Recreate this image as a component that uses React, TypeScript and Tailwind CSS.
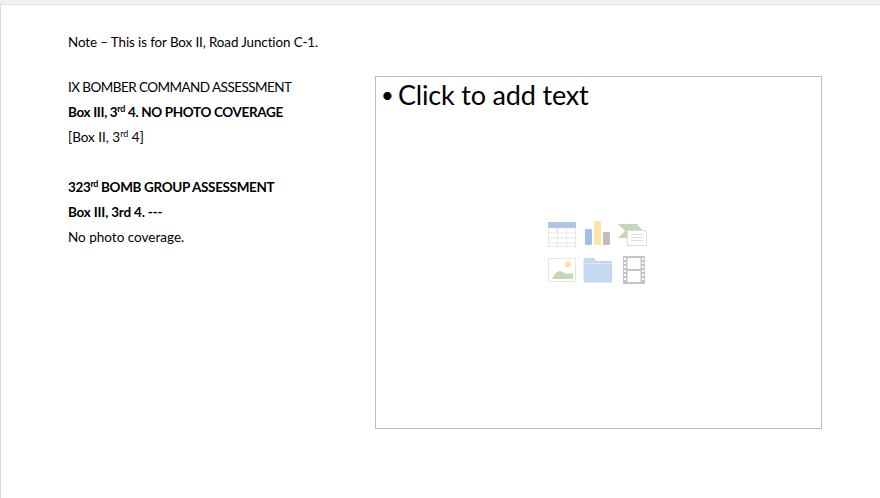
const Sup = ({ children }: { children: React.ReactNode }) => (
  <sup className="relative top-[-5px] align-baseline text-[9px] leading-none">{children}</sup>
);

const TableIcon = () => (
  <svg width="28" height="28" viewBox="0 0 28 28" className="opacity-45">
    <rect x="0.5" y="2.5" width="27" height="24" fill="#fff" stroke="#c9c9c9" />
    <rect x="0" y="2" width="28" height="6" fill="#4f7fc9" />
    <path d="M0 13h28M0 18h28M0 23h28M9.5 8v18M18.5 8v18" stroke="#c9c9c9" fill="none" />
  </svg>
);

const ChartIcon = () => (
  <svg width="29" height="28" viewBox="0 0 29 28" className="opacity-45">
    <rect x="2" y="9" width="7" height="16" rx="1" fill="#2f74d0" />
    <rect x="11" y="1" width="7" height="24" rx="1" fill="#f6c445" />
    <rect x="20" y="12" width="7" height="13" rx="1" fill="#6f6f6f" />
  </svg>
);

const SmartArtIcon = () => (
  <svg width="29" height="28" viewBox="0 0 29 28" className="opacity-45">
    <path d="M0 4h19l6 7h-8l-1 7H0l7-7z" fill="#7fa862" />
    <rect x="9.5" y="10.5" width="19" height="15" fill="#fff" stroke="#b5b5b5" />
    <path d="M13 14.5h12M13 17.5h12M13 20.5h12" stroke="#b5b5b5" fill="none" />
  </svg>
);

const PictureIcon = () => (
  <svg width="28" height="28" viewBox="0 0 28 28" className="opacity-45">
    <rect x="0.5" y="2.5" width="27" height="23" fill="#fff" stroke="#c4c4c4" />
    <circle cx="20" cy="8.5" r="3" fill="#f0b93a" />
    <path d="M4 23c2-5 5-8 8-8 3 0 4 3 7 3 2 0 3-1 6-1v6z" fill="#7fa862" />
  </svg>
);

const FolderIcon = () => (
  <svg width="29" height="28" viewBox="0 0 29 28" className="opacity-45">
    <path d="M1 2.5h10l2 3h16v20.5H1z" fill="#7fadde" stroke="#6b97c6" strokeWidth="0.8" />
    <path d="M1 7.5h28" stroke="#a9c9ea" fill="none" />
  </svg>
);

const FilmIcon = () => (
  <svg width="22" height="28" viewBox="0 0 22 28" className="opacity-50">
    <rect x="0" y="0" width="22" height="28" fill="#8a8a8a" />
    <rect x="4.5" y="2" width="13" height="11" fill="#fff" />
    <rect x="4.5" y="15" width="13" height="11" fill="#fff" />
    <path d="M1 3h2M1 7h2M1 11h2M1 15h2M1 19h2M1 23h2M19 3h2M19 7h2M19 11h2M19 15h2M19 19h2M19 23h2" stroke="#fff" strokeWidth="2" fill="none" />
  </svg>
);

export default function App() {
  return (
    <div className="h-[498px] w-[880px] overflow-hidden bg-white font-['Lato','Open_Sans',sans-serif] text-black">
      <div className="h-[5px] border-b border-[#e2e2e2] bg-[#f1f1f1]" />
      <div className="h-[493px] border-l border-[#dcdcdc] pl-[67px] pr-[58px] pt-[25px]">
        <p className="text-[13.4px] leading-[25px] tracking-[-0.1px]">
          Note – This is for Box II, Road Junction C-1.
        </p>
        <div className="mt-[20px] flex">
          <div className="w-[307px] text-[13.5px] leading-[25px]">
            <p className="tracking-[-0.55px]">IX BOMBER COMMAND ASSESSMENT</p>
            <p className="font-bold tracking-[-0.35px]">Box III, 3<Sup>rd</Sup> 4. NO PHOTO COVERAGE</p>
            <p>[Box II, 3<Sup>rd</Sup> 4]</p>
            <p className="mt-[25px] font-bold tracking-[-0.35px]">323<Sup>rd</Sup> BOMB GROUP ASSESSMENT</p>
            <p className="font-bold tracking-[-0.2px]">Box III, 3rd 4. ---</p>
            <p>No photo coverage.</p>
          </div>
          <div className="mt-[1px] flex h-[353px] w-[447px] flex-col border border-[#bdbdbd] pl-[5px]">
            <p className="flex items-center text-[27px] leading-[36px]">
              <span className="w-[17px] text-[22px]">•</span>
              <span className="tracking-[-0.18px]">Click to add text</span>
            </p>
            <div className="mt-[107px] ml-[167px] grid w-[99px] grid-cols-[28px_29px_29px] gap-y-[8px]">
              <TableIcon />
              <div className="ml-[7px]">
                <ChartIcon />
              </div>
              <div className="ml-[13px]">
                <SmartArtIcon />
              </div>
              <PictureIcon />
              <div className="ml-[7px]">
                <FolderIcon />
              </div>
              <div className="ml-[18px]">
                <FilmIcon />
              </div>
            </div>
          </div>
        </div>
      </div>
    </div>
  );
}
